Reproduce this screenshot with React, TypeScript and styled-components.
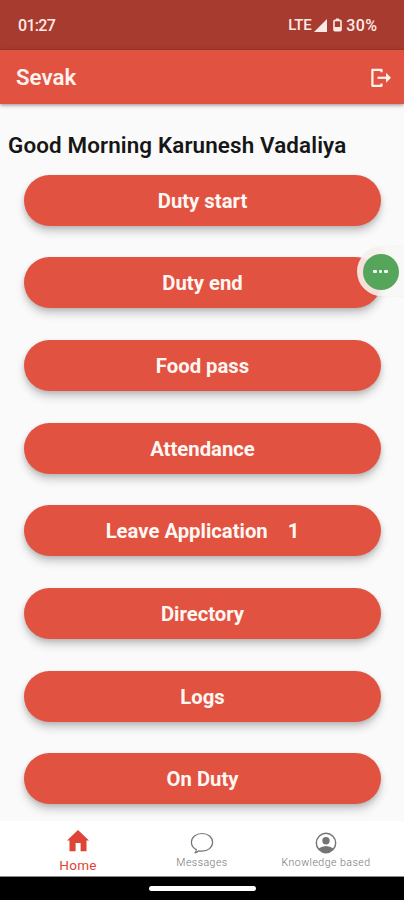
import React from "react";
import styled, { createGlobalStyle } from "styled-components";

const GlobalStyle = createGlobalStyle`
  * { box-sizing: border-box; }
  body { margin: 0; background: #fafafa; }
`;

const Screen = styled.div`
  position: relative;
  width: 404px;
  height: 900px;
  overflow: hidden;
  display: flex;
  flex-direction: column;
  background: #fafafa;
  font-family: Roboto, sans-serif;
`;

const StatusBar = styled.div`
  flex: none;
  height: 50px;
  padding: 0 27px 0 18px;
  display: flex;
  align-items: center;
  justify-content: space-between;
  background: #a83b30;
  color: #fdeae6;
  font-size: 16px;
  font-weight: 500;
`;

const Clock = styled.span`
  letter-spacing: -0.7px;
`;

const StatusIcons = styled.div`
  display: flex;
  align-items: center;
  svg { display: block; }
`;

const Network = styled.span`
  font-size: 15px;
  letter-spacing: -0.3px;
  margin-right: 3px;
`;

const Percent = styled.span`
  margin-left: 4px;
  letter-spacing: 0.4px;
  margin-right: -0.5px;
`;

const Battery = styled.svg`
  margin-left: 6px;
`;

const AppBar = styled.header`
  flex: none;
  z-index: 1;
  height: 54px;
  padding: 0 12px 0 16px;
  display: flex;
  align-items: center;
  justify-content: space-between;
  background: #e25241;
  color: #fff3ef;
  box-shadow: 0 1px 4px rgba(0, 0, 0, 0.45);
`;

const Title = styled.h1`
  margin: -1px 0 0;
  font-size: 22.3px;
  font-weight: 600;
`;

const IconButton = styled.button`
  padding: 1px 0 0;
  border: 0;
  background: none;
  color: inherit;
  svg { display: block; }
`;

const Content = styled.main`
  flex: 1;
  min-height: 0;
  overflow: hidden;
  display: flex;
  flex-direction: column;
`;

const Greeting = styled.h2`
  flex: none;
  margin: 27px 0 1px 8px;
  height: 28px;
  line-height: 28px;
  color: #161616;
  font-size: 22.4px;
  font-weight: 600;
  letter-spacing: 0.13px;
  white-space: nowrap;
`;

const Menu = styled.div`
  flex: none;
  display: flex;
  flex-direction: column;
  gap: 31.67px;
  padding: 14.6px 23px 0 24px;
`;

const MenuButton = styled.button`
  flex: none;
  height: 51px;
  padding: 1px 0 0;
  border: 0;
  border-radius: 26px;
  display: flex;
  align-items: center;
  justify-content: center;
  gap: 20px;
  background: #e25241;
  color: #fff7f3;
  font: 700 20.3px Roboto, sans-serif;
  box-shadow: 0 6px 9px rgba(0, 0, 0, 0.18), 0 2px 4px rgba(0, 0, 0, 0.12);
`;

const FloatingHandle = styled.div`
  position: absolute;
  top: 247px;
  right: 0;
  width: 47px;
  height: 49px;
  padding-left: 5.5px;
  display: flex;
  align-items: center;
  border-radius: 25px 0 0 25px;
  background: linear-gradient(90deg, rgba(247, 239, 236, 0.9) 50%, #f8f8f8 62%);
  box-shadow: 0 0 2px rgba(0, 0, 0, 0.08);
`;

const Bubble = styled.div`
  width: 36px;
  height: 36px;
  border-radius: 50%;
  display: flex;
  align-items: center;
  justify-content: center;
  gap: 2px;
  background: #55a65b;
`;

const Dot = styled.span`
  width: 3.5px;
  height: 3.5px;
  border-radius: 1px;
  background: #f3faf0;
`;

const TabBar = styled.nav`
  flex: none;
  height: 56px;
  padding: 0 16px;
  display: grid;
  grid-template-columns: repeat(3, 124px);
  background: #fff;
  border-bottom: 1px solid #8c8c8c;
`;

const Tab = styled.div<{ $active?: boolean }>`
  display: flex;
  flex-direction: column;
  align-items: center;
  padding-top: ${(p) => (p.$active ? "8px" : "11px")};
  color: ${(p) => (p.$active ? "#de4536" : "#747474")};
  svg { display: block; }
`;

const TabLabel = styled.span<{ $active?: boolean }>`
  margin-top: ${(p) => (p.$active ? "4px" : "2px")};
  font-size: ${(p) => (p.$active ? "13.5px" : "10.6px")};
  font-weight: ${(p) => (p.$active ? 400 : 300)};
  line-height: ${(p) => (p.$active ? "16px" : "13px")};
  letter-spacing: ${(p) => (p.$active ? "0.3px" : "0.45px")};
  white-space: nowrap;
`;

const SystemBar = styled.div`
  flex: none;
  height: 23px;
  padding-top: 9px;
  display: flex;
  justify-content: center;
  background: #000;
`;

const GestureLine = styled.div`
  width: 107px;
  height: 5px;
  border-radius: 3px;
  background: #fff;
`;

const items: { label: string; count?: number }[] = [
  { label: "Duty start" },
  { label: "Duty end" },
  { label: "Food pass" },
  { label: "Attendance" },
  { label: "Leave Application", count: 1 },
  { label: "Directory" },
  { label: "Logs" },
  { label: "On Duty" },
];

export default function App() {
  return (
    <Screen>
      <GlobalStyle />
      <StatusBar>
        <Clock>01:27</Clock>
        <StatusIcons>
          <Network>LTE</Network>
          <svg width="13" height="13" viewBox="0 0 13 13">
            <path d="M13 0V13H0Z" fill="currentColor" />
          </svg>
          <Battery width="9" height="14" viewBox="0 0 9 14">
            <path d="M3 .5h3v1.7H3z" fill="currentColor" />
            <rect x="1" y="2.4" width="7" height="10.4" rx="1" fill="none" stroke="currentColor" strokeWidth="1.6" />
            <path d="M1 9h7v4H1z" fill="currentColor" />
          </Battery>
          <Percent>30%</Percent>
        </StatusIcons>
      </StatusBar>
      <AppBar>
        <Title>Sevak</Title>
        <IconButton aria-label="Log out">
          <svg width="22" height="20" viewBox="0 0 22 20" fill="none" stroke="currentColor" strokeWidth="2.2">
            <path d="M11.500 4.200V1.800H2.400V17.800H11.500V15.400" strokeLinejoin="round" />
            <path d="M7.500 9.800H18" />
            <path d="M16 4.800L21 9.800L16 14.800Z" fill="currentColor" stroke="none" />
          </svg>
        </IconButton>
      </AppBar>
      <Content>
        <Greeting>Good Morning Karunesh Vadaliya</Greeting>
        <Menu>
          {items.map((item) => (
            <MenuButton key={item.label}>
              <span>{item.label}</span>
              {item.count !== undefined && <span>{item.count}</span>}
            </MenuButton>
          ))}
        </Menu>
      </Content>
      <TabBar>
        <Tab $active>
          <svg width="24" height="24" viewBox="0 0 24 24">
            <path d="M12 1L23 11.500H20.500V22.300H14.600V14H9.600V22.300H3.500V11.500H1Z" fill="currentColor" />
          </svg>
          <TabLabel $active>Home</TabLabel>
        </Tab>
        <Tab>
          <svg width="24" height="22" viewBox="0 0 24 22">
            <path
              d="M6.300 17.600C3.200 16 1.400 13.300 1.400 10.300C1.400 5.300 6 1.500 12 1.500S22.600 5.300 22.600 10.300S18 19.200 12 19.200Q10.200 19.200 8.600 18.800Q7.200 20.600 5 20.800Q6.400 19.500 6.300 17.600Z"
              fill="none"
              stroke="currentColor"
              strokeWidth="1.2"
              strokeLinejoin="round"
            />
          </svg>
          <TabLabel>Messages</TabLabel>
        </Tab>
        <Tab>
          <svg width="22" height="22" viewBox="0 0 22 22">
            <circle cx="11" cy="11" r="9.700" fill="none" stroke="currentColor" strokeWidth="1.400" />
            <circle cx="11" cy="8.700" r="3.700" fill="currentColor" />
            <path d="M3.500 16.500Q7 14 11 14T18.500 16.500Q15.500 20.400 11 20.400T3.500 16.500Z" fill="currentColor" />
          </svg>
          <TabLabel>Knowledge based</TabLabel>
        </Tab>
      </TabBar>
      <SystemBar>
        <GestureLine />
      </SystemBar>
      <FloatingHandle>
        <Bubble>
          <Dot />
          <Dot />
          <Dot />
        </Bubble>
      </FloatingHandle>
    </Screen>
  );
}
